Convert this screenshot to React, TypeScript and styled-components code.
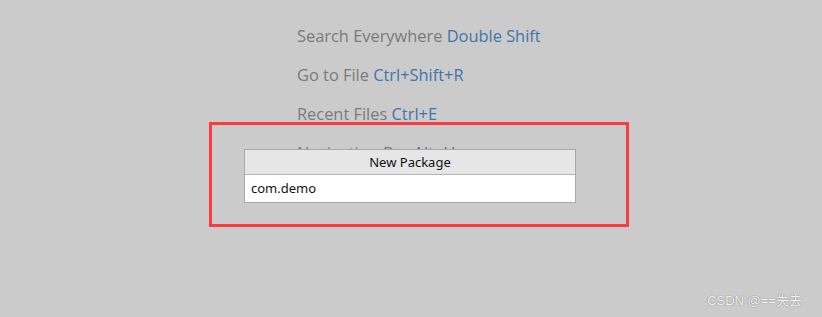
import React from "react";
import styled, { createGlobalStyle } from "styled-components";

const GlobalStyle = createGlobalStyle`
  html, body {
    margin: 0;
    padding: 0;
    background: #cbcbcb;
  }
  * {
    box-sizing: border-box;
  }
`;

const Page = styled.div`
  position: relative;
  width: 822px;
  height: 317px;
  overflow: hidden;
  background: #cbcbcb;
  font-family: "Open Sans", "Noto Sans", sans-serif;
`;

const HintList = styled.ul`
  list-style: none;
  margin: 0;
  padding: 16px 0 0 297px;
  display: flex;
  flex-direction: column;
`;

const Hint = styled.li`
  font-size: 16.4px;
  line-height: 39px;
  color: #7a7a7a;
  white-space: nowrap;
`;

const Shortcut = styled.span`
  color: #4274aa;
`;

const Annotation = styled.div`
  position: absolute;
  left: 209px;
  top: 122px;
  width: 420px;
  height: 105px;
  border: 3px solid #fd3b3c;
  padding: 24px 0 0 32px;
`;

const Dialog = styled.div`
  width: 332px;
  border: 1px solid #a9a9a9;
  background: #ffffff;
  font-family: "Noto Sans", "Open Sans", sans-serif;
  font-size: 13px;
  color: #111;
`;

const DialogTitle = styled.div`
  height: 25px;
  line-height: 24px;
  text-align: center;
  background: #e6e6e6;
  border-bottom: 1px solid #b4b4b4;
`;

const NameInput = styled.div`
  height: 27px;
  line-height: 27px;
  padding-left: 6px;
`;

const Watermark = styled.div`
  position: absolute;
  right: 20px;
  bottom: 8px;
  font-family: "Liberation Sans", "Noto Sans CJK SC", sans-serif;
  font-size: 13px;
  color: #f2f2f2;
  text-shadow: 0 0 1px #8a8a8a, 0 0 1px #8a8a8a;
`;

const hints = [
  { label: "Search Everywhere", keys: "Double Shift" },
  { label: "Go to File", keys: "Ctrl+Shift+R" },
  { label: "Recent Files", keys: "Ctrl+E" },
  { label: "Navigation Bar", keys: "Alt+Home" },
];

export default function App() {
  return (
    <Page>
      <GlobalStyle />
      <HintList>
        {hints.map((h) => (
          <Hint key={h.label}>
            {h.label} <Shortcut>{h.keys}</Shortcut>
          </Hint>
        ))}
      </HintList>
      <Annotation>
        <Dialog>
          <DialogTitle>New Package</DialogTitle>
          <NameInput>com.demo</NameInput>
        </Dialog>
      </Annotation>
      <Watermark>CSDN @==失去</Watermark>
    </Page>
  );
}
